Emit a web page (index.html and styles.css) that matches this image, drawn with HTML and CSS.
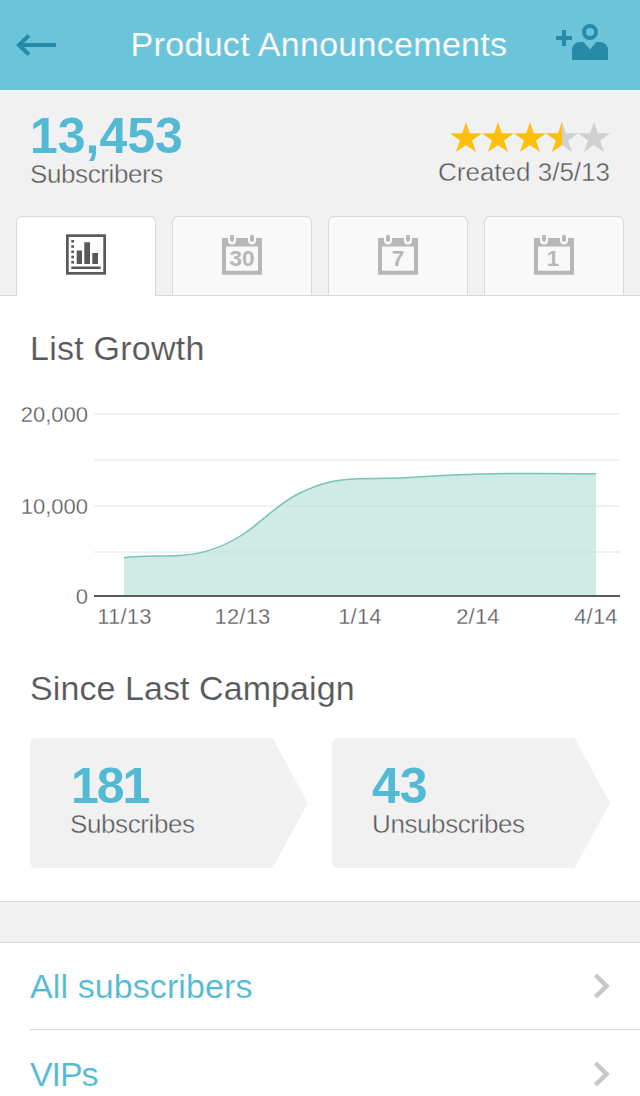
FILE: index.html
```html
<!DOCTYPE html>
<html lang="en">
<head>
<meta charset="utf-8">
<title>Product Announcements</title>
<link rel="stylesheet" href="styles.css">
</head>
<body>
<svg class="defs" width="0" height="0" aria-hidden="true">
  <defs>
    <path id="star" d="M16 0l3.9 11.3H32l-9.9 7.1L26 30l-10-7L6 30l3.9-11.6L0 11.3h12.1z"/>
    <path id="calendar" fill-rule="evenodd" d="M0 4h6v2.5a4 4 0 0 0 8 0V4h12v2.5a4 4 0 0 0 8 0V4h6v36.7H0zM4 12.4v24.3h32V12.4z"/>
    <path id="rings" d="M10 2.7v3M30 2.7v3"/>
  </defs>
</svg>
<div class="page">
  <header class="topbar">
    <svg class="back" width="40" height="22" viewBox="0 0 40 22"><path d="M40 11H3M13 1.4L3 11l10 9.6"/></svg>
    <h1 class="title">Product Announcements</h1>
    <svg class="add-person" width="52" height="36" viewBox="0 0 52 36">
      <path d="M0 12h6V6h4v6h6v4h-6v6H6v-6H0z"/>
      <circle class="head" cx="34" cy="8" r="6"/>
      <path d="M16 36V26a8 8 0 0 1 8-8h3.7l6.3 7.5 6.3-7.5H44a8 8 0 0 1 8 8v10z"/>
    </svg>
  </header>

  <section class="summary">
    <div class="overview">
      <div class="total">
        <div class="number">13,453</div>
        <div class="label">Subscribers</div>
      </div>
      <div class="meta">
        <svg class="stars" width="160" height="32" viewBox="0 0 160 32">
          <g class="star-on"><use href="#star"/><use href="#star" x="32"/><use href="#star" x="64"/></g>
          <g class="star-off"><use href="#star" x="96"/><use href="#star" x="128"/></g>
          <path class="star-on" d="M112 0v23l-10 7 3.9-11.6-9.9-7.1h12.1z"/>
        </svg>
        <div class="label created">Created 3/5/13</div>
      </div>
    </div>
    <nav class="tabs">
      <a class="tab tab-active">
        <svg width="40" height="41" viewBox="0 0 40 41">
          <rect class="frame" x="1.35" y="1.65" width="37.3" height="37.7"/>
          <path d="M5.3 6H8v2.5H5.3zM5.3 11.2H8v2.5H5.3zM5.3 16.5H8V19H5.3zM5.3 21.8H8v2.5H5.3zM5.3 27H8v2.6H5.3zM10.7 16.5H16V30h-5.3zM18.3 8.3H24V30h-5.7zM26.3 19H32v11h-5.7zM5.3 32.4h29.4V35H5.3z"/>
        </svg>
      </a>
      <a class="tab">
        <svg width="40" height="41" viewBox="0 0 40 41"><use href="#calendar"/><use class="rings" href="#rings"/><text x="20" y="32.4">30</text></svg>
      </a>
      <a class="tab">
        <svg width="40" height="41" viewBox="0 0 40 41"><use href="#calendar"/><use class="rings" href="#rings"/><text x="20" y="32.4">7</text></svg>
      </a>
      <a class="tab">
        <svg width="40" height="41" viewBox="0 0 40 41"><use href="#calendar"/><use class="rings" href="#rings"/><text x="19" y="32.4">1</text></svg>
      </a>
    </nav>
  </section>

  <main class="content">
    <h2 class="heading">List Growth</h2>
    <svg class="chart" width="640" height="250" viewBox="0 390 640 250">
      <path class="grid" d="M94 414h526M94 460h526M94 506h526M94 552h526"/>
      <path class="area" d="M124 557.7C144 555.6 164 556.5 180 555.5C204 554 226 546 245 533C265 519 278 504 298 494C320 483 336 479.4 358 478.8C380 478.4 396 479 418 477.1C442 475 460 474.6 480 474C510 473 550 473.3 596 473.7V596H124z"/>
      <path class="line" d="M124 557.7C144 555.6 164 556.5 180 555.5C204 554 226 546 245 533C265 519 278 504 298 494C320 483 336 479.4 358 478.8C380 478.4 396 479 418 477.1C442 475 460 474.6 480 474C510 473 550 473.3 596 473.7"/>
      <path class="axis" d="M94 596h526"/>
      <g class="y-label"><text x="88" y="422">20,000</text><text x="88" y="514">10,000</text><text x="88" y="604">0</text></g>
      <g class="x-label"><text x="124.5" y="624">11/13</text><text x="242.5" y="624">12/13</text><text x="360" y="624">1/14</text><text x="478" y="624">2/14</text><text x="596" y="624">4/14</text></g>
    </svg>
    <h2 class="heading heading-since">Since Last Campaign</h2>
    <div class="cards">
      <div class="card">
        <div class="number number-subscribes">181</div>
        <div class="label">Subscribes</div>
      </div>
      <div class="card">
        <div class="number">43</div>
        <div class="label">Unsubscribes</div>
      </div>
    </div>
  </main>

  <div class="divider"></div>

  <div class="list">
    <a class="row">
      <span class="row-name">All subscribers</span>
      <svg class="chevron" width="17" height="26" viewBox="0 0 17 26"><path d="M2.5 2.2L13.5 13l-11 10.8"/></svg>
    </a>
    <a class="row">
      <span class="row-name row-vips">VIPs</span>
      <svg class="chevron" width="17" height="26" viewBox="0 0 17 26"><path d="M2.5 2.2L13.5 13l-11 10.8"/></svg>
    </a>
  </div>
</div>
</body>
</html>
```
FILE: styles.css
```css
* { box-sizing: border-box; }

body {
  margin: 0;
  background: #fff;
  color: #58595b;
  font-family: "Liberation Sans", Arial, sans-serif;
}

svg { display: block; flex: none; }
.defs { position: absolute; }

.page {
  width: 640px;
  height: 1096px;
  overflow: hidden;
}

/* Header */
.topbar {
  display: flex;
  align-items: center;
  justify-content: space-between;
  height: 90px;
  padding: 0 32px 0 16px;
  background: #6cc4db;
}
.back { fill: none; stroke: #278ba8; stroke-width: 4; }
.title {
  margin: 0 0 2px 26px;
  color: #fff;
  font-size: 34px;
  font-weight: 400;
  line-height: 40px;
  letter-spacing: .3px;
  -webkit-text-stroke: .15px #6cc4db;
}
.add-person { margin-bottom: 6px; fill: #278ba8; }
.head { fill: none; stroke: #278ba8; stroke-width: 4; }

/* Summary */
.summary {
  height: 206px;
  padding: 20px 16px 0;
  background: #f1f1f1;
  border-bottom: 1px solid #d9d9d9;
}
.overview {
  display: flex;
  justify-content: space-between;
  height: 106px;
  padding: 0 14px;
}
.number {
  padding-top: 1px;
  color: #52bad5;
  font-size: 50px;
  font-weight: 700;
  line-height: 50px;
}
.number-subscribes { letter-spacing: -2px; padding-left: 1px; }
.label {
  font-size: 26px;
  line-height: 28px;
  letter-spacing: -.4px;
  margin-top: -1px;
  -webkit-text-stroke: .4px #f1f1f1;
}
.meta {
  display: flex;
  flex-direction: column;
  align-items: flex-end;
  padding-top: 12px;
}
.label.created { margin-top: 4px; letter-spacing: 0; }
.star-on { fill: #ffbf10; }
.star-off { fill: #d0d0d0; }

/* Tabs */
.tabs { display: flex; gap: 16px; }
.tab {
  display: flex;
  justify-content: center;
  width: 140px;
  height: 79px;
  padding-top: 17px;
  border: 1px solid #d9d9d9;
  border-bottom-color: #f9f9f9;
  border-radius: 6px 6px 0 0;
  background: #f9f9f9;
  fill: #b7b7b7;
}
.tab-active {
  height: 80px;
  border-bottom: 0;
  background: #fff;
  fill: #58595b;
}
.frame { fill: none; stroke: #58595b; stroke-width: 2.7; }
.rings { fill: none; stroke: #b7b7b7; stroke-width: 4; stroke-linecap: round; }
.tab text { font-size: 22.5px; font-weight: 700; text-anchor: middle; }

/* Growth and campaign figures */
.content { height: 605px; padding-top: 32px; }
.heading {
  margin: 0;
  padding-left: 30px;
  font-size: 34px;
  font-weight: 400;
  line-height: 40px;
  letter-spacing: .25px;
  -webkit-text-stroke: .15px #fff;
}
.chart { margin-top: 22px; }
.grid { fill: none; stroke: #f1f1f1; stroke-width: 2; }
.area { fill: #b9dfd7; fill-opacity: .67; }
.line { fill: none; stroke: #76c5b5; stroke-width: 1.5; }
.axis { stroke: #58595b; stroke-width: 2; }
.chart text {
  fill: #58595b;
  font-size: 22px;
  stroke: #fff;
  stroke-width: .3px;
}
.y-label { text-anchor: end; }
.x-label { text-anchor: middle; letter-spacing: .2px; }
.heading-since { margin-top: 28px; letter-spacing: .08px; }
.cards {
  display: flex;
  gap: 24px;
  padding: 30px 30px 0;
}
.card {
  width: 278px;
  height: 130px;
  padding: 22px 0 0 40px;
  border-radius: 6px;
  background: #f1f1f1;
  clip-path: polygon(0 0, 242.5px 0, 100% 50%, 242.5px 100%, 0 100%);
}

/* Subscriber lists */
.divider {
  height: 42px;
  background: #f1f1f1;
  border: solid #d9d9d9;
  border-width: 1px 0;
}
.list { padding-left: 30px; }
.row {
  display: flex;
  align-items: center;
  justify-content: space-between;
  height: 87px;
  padding-right: 30px;
  border-bottom: 1px solid #d9d9d9;
}
.row + .row { height: 89px; }
.row-name {
  color: #52bad5;
  font-size: 34px;
  line-height: 40px;
  letter-spacing: .1px;
  -webkit-text-stroke: .15px #fff;
}
.row-vips { letter-spacing: -1.1px; }
.chevron { fill: none; stroke: #c7c7cc; stroke-width: 4.5; }
```
